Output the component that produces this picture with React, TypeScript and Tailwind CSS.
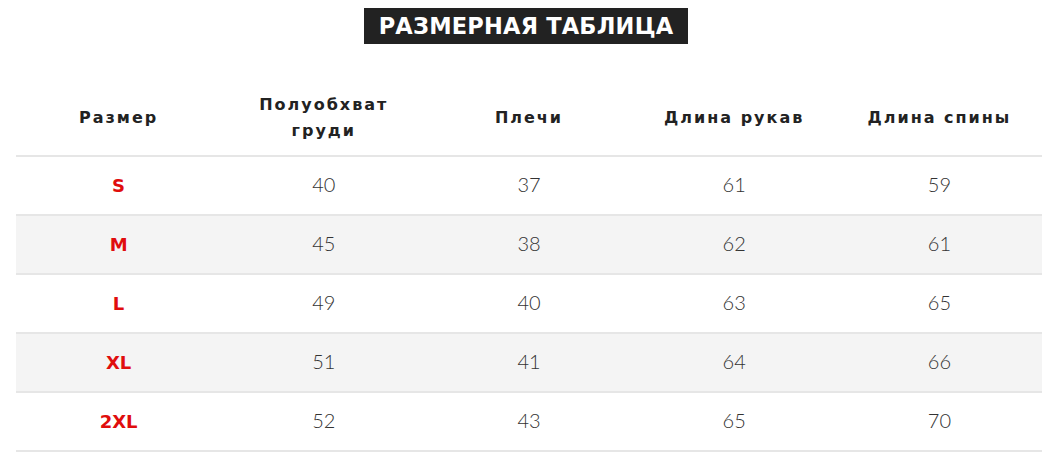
import React from "react";

interface SizeRow {
    size: string;
    chest: number;
    shoulders: number;
    sleeve: number;
    back: number;
}

const rows: SizeRow[] = [
    {size: "S", chest: 40, shoulders: 37, sleeve: 61, back: 59},
    {size: "M", chest: 45, shoulders: 38, sleeve: 62, back: 61},
    {size: "L", chest: 49, shoulders: 40, sleeve: 63, back: 65},
    {size: "XL", chest: 51, shoulders: 41, sleeve: 64, back: 66},
    {size: "2XL", chest: 52, shoulders: 43, sleeve: 65, back: 70},
];

const headers = ["Размер", "Полуобхват груди", "Плечи", "Длина рукав", "Длина спины"];

const App: React.FC = () => {
    return (
        <div className="w-full min-h-[476px] bg-white font-['DejaVu_Sans',sans-serif]">
            <div className="flex justify-center pt-2">
                <h2 className="h-9 px-[15px] flex items-center bg-[#222222] text-white text-[22.5px] font-bold tracking-[0.2px] leading-none">
                    РАЗМЕРНАЯ ТАБЛИЦА
                </h2>
            </div>

            <div className="ml-4 mr-[10px] mt-9">
                <div className="grid grid-cols-5 h-[75px] items-center">
                    {headers.map((h) => (
                        <div
                            key={h}
                            className="text-center text-[16px] font-bold tracking-[2px] leading-[26px] text-[#222222] px-3"
                        >
                            {h}
                        </div>
                    ))}
                </div>
                {rows.map((r, i) => (
                    <div
                        key={r.size}
                        className={
                            "grid grid-cols-5 h-[59px] items-center border-t-2 border-[#e6e6e6] " +
                            (i % 2 === 1 ? "bg-[#f4f4f4] " : "bg-white ") +
                            (i === rows.length - 1 ? "border-b-2 h-[61px]" : "")
                        }
                    >
                        <div className="text-center text-[18px] font-bold text-[#e00d0d]">{r.size}</div>
                        <div className="text-center text-[20px] font-light text-[#333333] font-['Lato',sans-serif] pb-1">{r.chest}</div>
                        <div className="text-center text-[20px] font-light text-[#333333] font-['Lato',sans-serif] pb-1">{r.shoulders}</div>
                        <div className="text-center text-[20px] font-light text-[#333333] font-['Lato',sans-serif] pb-1">{r.sleeve}</div>
                        <div className="text-center text-[20px] font-light text-[#333333] font-['Lato',sans-serif] pb-1">{r.back}</div>
                    </div>
                ))}
            </div>
        </div>
    );
};

export default App;
